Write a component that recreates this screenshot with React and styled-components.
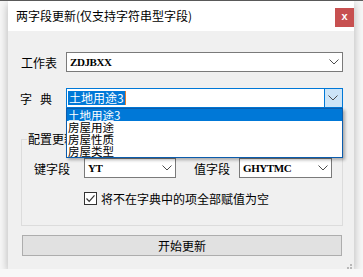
import React from 'react'
import styled, { createGlobalStyle } from 'styled-components'

const GlobalStyle = createGlobalStyle`
    body {
        margin: 0;
        background: #f7f7f7;
        font-family: "Noto Sans CJK SC", "Liberation Sans", sans-serif;
        font-size: 12px;
        color: #000;
    }
`

const Chevron = () => (
    <svg width="10" height="6" viewBox="0 0 10 6">
        <path d="M0.5 0.5 L5 5 L9.5 0.5" fill="none" stroke="#4d4d4d" strokeWidth="1" />
    </svg>
)

function Select({ value, width, focused }) {
    return (
        <SelectBox width={width} focused={focused}>
            {focused ? <Picked>{value}</Picked> : <SelectText>{value}</SelectText>}
            {focused && <Caret />}
            <Arrow focused={focused}>
                <Chevron />
            </Arrow>
        </SelectBox>
    )
}

const items = ['土地用途3', '房屋用途', '房屋性质', '房屋类型']

function App() {
    return (
        <>
            <GlobalStyle />
            <TopEdge />
            <Window>
                <TitleBar>
                    <Title>两字段更新(仅支持字符串型字段)</Title>
                    <CloseButton>x</CloseButton>
                </TitleBar>
                <Body>
                    <Row>
                        <Label>工作表</Label>
                        <Select value="ZDJBXX" width={277} />
                    </Row>
                    <Row gap={16}>
                        <Label spaced>字典</Label>
                        <DropWrap>
                            <Select value="土地用途3" width={277} focused />
                            <List>
                                {items.map((t, i) => (
                                    <Item key={t} active={i === 0}>{t}</Item>
                                ))}
                            </List>
                        </DropWrap>
                    </Row>
                    <Group>
                        <Legend>配置更新</Legend>
                        <FieldRow>
                            <FieldLabel>键字段</FieldLabel>
                            <Select value="YT" width={92} />
                            <FieldLabel second>值字段</FieldLabel>
                            <Select value="GHYTMC" width={93} />
                        </FieldRow>
                        <CheckRow>
                            <CheckBox>
                                <svg width="11" height="11" viewBox="0 0 11 11">
                                    <path d="M1.5 5.5 L4.2 8.3 L9.5 2.3" fill="none" stroke="#333" strokeWidth="1.2" />
                                </svg>
                            </CheckBox>
                            <span>将不在字典中的项全部赋值为空</span>
                        </CheckRow>
                    </Group>
                    <StartButton>开始更新</StartButton>
                </Body>
                <Grip>
                    <svg width="8" height="8" viewBox="0 0 8 8">
                        <rect x="6" y="0" width="2" height="2" fill="#b8b8b8" />
                        <rect x="3" y="3" width="2" height="2" fill="#b8b8b8" />
                        <rect x="6" y="3" width="2" height="2" fill="#b8b8b8" />
                        <rect x="0" y="6" width="2" height="2" fill="#b8b8b8" />
                        <rect x="3" y="6" width="2" height="2" fill="#b8b8b8" />
                        <rect x="6" y="6" width="2" height="2" fill="#b8b8b8" />
                    </svg>
                </Grip>
            </Window>
        </>
    )
}

export default App

const TopEdge = styled.div`
    height: 1px;
    background: #5f5f5f;
`

const Window = styled.div`
    position: relative;
    width: 346px;
    height: 268px;
    margin-left: 8px;
    background: #f0f0f0;
    box-shadow: 0 3px 9px rgba(0, 0, 0, 0.28);
    display: flex;
    flex-direction: column;
`

const TitleBar = styled.div`
    height: 30px;
    background: #fff;
    display: flex;
    align-items: flex-start;
    justify-content: space-between;
    padding-left: 8px;
`

const Title = styled.div`
    font-size: 12px;
    line-height: 30px;
    height: 30px;
`

const CloseButton = styled.div`
    margin-top: 7px;
    width: 19px;
    height: 19px;
    background: #c75050;
    color: #fff;
    font-family: "Liberation Sans", sans-serif;
    font-weight: bold;
    font-size: 11px;
    line-height: 17px;
    text-align: center;
`

const Body = styled.div`
    flex: 1;
    display: flex;
    flex-direction: column;
    padding: 21px 11px 0 13px;
`

const Row = styled.div`
    display: flex;
    align-items: center;
    margin-top: ${p => (p.gap ? p.gap : 0)}px;
`

const Label = styled.div`
    width: 45px;
    margin-left: ${p => (p.spaced ? -1 : 0)}px;
    margin-right: ${p => (p.spaced ? 1 : 0)}px;
    letter-spacing: ${p => (p.spaced ? '8px' : '0')};
    font-size: 12px;
    white-space: nowrap;
`

const DropWrap = styled.div`
    position: relative;
`

const SelectBox = styled.div`
    position: relative;
    box-sizing: border-box;
    width: ${p => p.width}px;
    height: 20px;
    background: #fff;
    border: 1px solid ${p => (p.focused ? '#0078d7' : '#7a7a7a')};
    display: flex;
    align-items: center;
`

const SelectText = styled.span`
    padding-left: 3px;
    font-family: "Liberation Serif", serif;
    font-size: 11px;
    font-weight: bold;
    letter-spacing: -0.4px;
    flex: 1;
`

const Picked = styled.span`
    margin-left: 1px;
    background: #0078d7;
    color: #fff;
    font-size: 12px;
    line-height: 14px;
    padding: 0 1px;
`

const Caret = styled.span`
    width: 1px;
    height: 14px;
    background: #e67c2e;
    flex: 0 0 1px;
    margin-right: auto;
`

const Arrow = styled.div`
    width: ${p => (p.focused ? 17 : 16)}px;
    height: 100%;
    margin-left: auto;
    display: flex;
    align-items: center;
    justify-content: center;
    background: ${p => (p.focused ? '#cce4f7' : 'transparent')};
    border-left: 1px solid ${p => (p.focused ? '#0078d7' : 'transparent')};
`

const List = styled.div`
    position: absolute;
    left: 0;
    top: 20px;
    z-index: 2;
    box-sizing: border-box;
    width: 277px;
    height: 50px;
    background: #fff;
    border: 1px solid #0b5cad;
    box-shadow: 2px 2px 3px rgba(0, 0, 0, 0.3);
`

const Item = styled.div`
    height: 12px;
    line-height: 12px;
    font-size: 11.5px;
    padding-left: 1px;
    background: ${p => (p.active ? '#0078d7' : 'transparent')};
    color: ${p => (p.active ? '#fff' : '#000')};
    white-space: nowrap;
`

const Group = styled.div`
    position: relative;
    box-sizing: border-box;
    width: 322px;
    height: 87px;
    margin-top: 31px;
    border: 1px solid #dcdcdc;
    padding: 18px 0 0 12px;
`

const Legend = styled.div`
    position: absolute;
    left: 5px;
    top: -9px;
    padding: 0 1px;
    background: #f0f0f0;
    font-size: 12px;
    line-height: 16px;
`

const FieldRow = styled.div`
    display: flex;
    align-items: center;
`

const FieldLabel = styled.div`
    width: 36px;
    margin-right: ${p => (p.second ? 9 : 14)}px;
    margin-left: ${p => (p.second ? 18 : 0)}px;
    font-size: 12px;
    white-space: nowrap;
`

const CheckRow = styled.div`
    display: flex;
    align-items: center;
    gap: 4px;
    margin-top: 12px;
    margin-left: 50px;
    font-size: 12px;
`

const CheckBox = styled.div`
    box-sizing: border-box;
    width: 13px;
    height: 13px;
    border: 1px solid #333;
    background: #fff;
    display: flex;
    align-items: center;
    justify-content: center;
`

const StartButton = styled.div`
    box-sizing: border-box;
    width: 320px;
    height: 21px;
    margin: 9px 0 0 1px;
    background: #e1e1e1;
    border: 1px solid #adadad;
    font-size: 12px;
    line-height: 19px;
    text-align: center;
`

const Grip = styled.div`
    position: absolute;
    right: 2px;
    bottom: 3px;
    width: 8px;
    height: 8px;
`
